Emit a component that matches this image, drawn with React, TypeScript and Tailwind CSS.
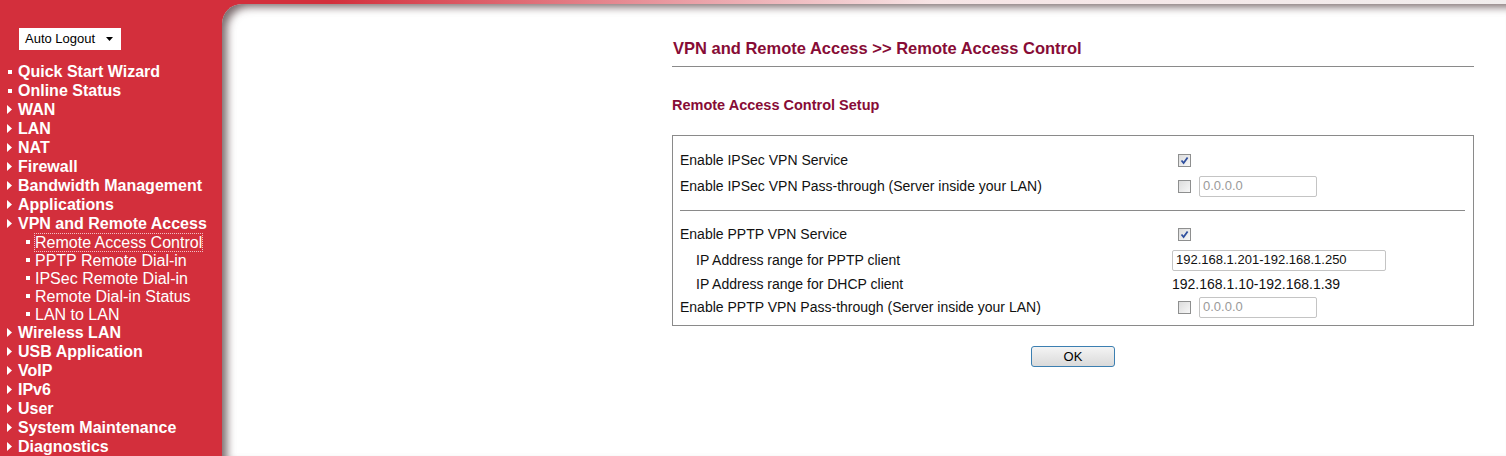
import React from "react";

type MenuItem = { label: string; marker: "square" | "arrow" };

const topItems: MenuItem[] = [
  { label: "Quick Start Wizard", marker: "square" },
  { label: "Online Status", marker: "square" },
  { label: "WAN", marker: "arrow" },
  { label: "LAN", marker: "arrow" },
  { label: "NAT", marker: "arrow" },
  { label: "Firewall", marker: "arrow" },
  { label: "Bandwidth Management", marker: "arrow" },
  { label: "Applications", marker: "arrow" },
  { label: "VPN and Remote Access", marker: "arrow" },
];

const subItems = [
  "Remote Access Control",
  "PPTP Remote Dial-in",
  "IPSec Remote Dial-in",
  "Remote Dial-in Status",
  "LAN to LAN",
];

const bottomItems: MenuItem[] = [
  { label: "Wireless LAN", marker: "arrow" },
  { label: "USB Application", marker: "arrow" },
  { label: "VoIP", marker: "arrow" },
  { label: "IPv6", marker: "arrow" },
  { label: "User", marker: "arrow" },
  { label: "System Maintenance", marker: "arrow" },
  { label: "Diagnostics", marker: "arrow" },
];

function Marker({ kind }: { kind: "square" | "arrow" }) {
  if (kind === "square") {
    return <span className="block w-[4px] h-[4px] bg-white ml-[8px]" />;
  }
  return (
    <svg width="6" height="9" viewBox="0 0 6 9" className="ml-[7px]">
      <path d="M0 0 L5 4.5 L0 9 Z" fill="#fff" />
    </svg>
  );
}

function MainLink({ item }: { item: MenuItem }) {
  return (
    <div className="flex items-center h-[19px]">
      <span className="w-[18px] flex items-center">
        <Marker kind={item.marker} />
      </span>
      <span className="text-white font-bold text-[16px] leading-[19px]">{item.label}</span>
    </div>
  );
}

function Checkbox({ checked }: { checked?: boolean }) {
  return (
    <span className="inline-flex items-center justify-center w-[13px] h-[13px] border border-[#8e8f8f] bg-gradient-to-br from-[#dcdcdc] to-[#f7f7f7]">
      {checked && (
        <svg width="9" height="9" viewBox="0 0 9 9">
          <path d="M1.5 4.5 L3.6 7 L7.6 1.5" fill="none" stroke="#2f4f9e" strokeWidth="1.8" />
        </svg>
      )}
    </span>
  );
}

function IpInput({ value, muted, width }: { value: string; muted?: boolean; width: string }) {
  return (
    <span
      className={`inline-flex items-center h-[21px] border border-[#c4c4c4] rounded-[2px] px-[3px] text-[13px] bg-white ${width} ${
        muted ? "text-[#9a9a9a]" : "text-[#111]"
      }`}
    >
      {value}
    </span>
  );
}

export default function App() {
  return (
    <div className="flex h-[456px] w-full overflow-hidden font-['Liberation_Sans',Arial,sans-serif] bg-[linear-gradient(to_right,#d32f3c_0%,#d32f3c_22%,#e99ca3_45%,#f6e4e5_62%,#f1eded_100%)]">
      {/* Sidebar */}
      <aside className="w-[222px] shrink-0 bg-[#d32f3c] pt-[28px]">
        <div className="ml-[19px] w-[102px] h-[22px] bg-white flex items-center justify-between pl-[6px] pr-[8px]">
          <span className="text-[13px] text-black">Auto Logout</span>
          <svg width="7" height="4" viewBox="0 0 7 4">
            <path d="M0 0 H7 L3.5 4 Z" fill="#000" />
          </svg>
        </div>

        <nav className="mt-[12px]">
          {topItems.map((it) => (
            <MainLink key={it.label} item={it} />
          ))}
          {subItems.map((s, i) => (
            <div key={s} className="flex items-center h-[18px]">
              <span className="w-[35px] flex items-center">
                <span className="block w-[4px] h-[4px] bg-white ml-[26px]" />
              </span>
              <span
                className={`text-white text-[16px] leading-[17px] ${
                  i === 0 ? "outline outline-1 outline-dotted outline-white/70" : ""
                }`}
              >
                {s}
              </span>
            </div>
          ))}
          {bottomItems.map((it) => (
            <MainLink key={it.label} item={it} />
          ))}
        </nav>
      </aside>

      {/* Main panel */}
      <main className="flex-1 mt-[4px] bg-white rounded-tl-[20px] shadow-[inset_7px_5px_8px_-2px_rgba(90,70,72,0.8)] pl-[450px] pt-[35px]">
        <div className="w-[802px]">
          <h1 className="text-[16.5px] font-bold text-[#870c36] leading-[19px] pl-[1px]">
            VPN and Remote Access &gt;&gt; Remote Access Control
          </h1>
          <div className="mt-[8px] h-[1px] bg-[#8a8a8a]" />

          <h2 className="mt-[30px] text-[14.5px] font-bold text-[#870c36] leading-[16px]">
            Remote Access Control Setup
          </h2>

          <div className="mt-[22px] border border-[#8a8a8a] px-[7px] pt-[11px] pb-[6px] text-[14px] text-[#111]">
            <div className="flex items-center h-[26px]">
              <span className="w-[492px]">Enable IPSec VPN Service</span>
              <span className="ml-[6px] flex items-center">
                <Checkbox checked />
              </span>
            </div>
            <div className="flex items-center h-[26px]">
              <span className="w-[492px]">Enable IPSec VPN Pass-through (Server inside your LAN)</span>
              <span className="ml-[6px] flex items-center gap-[8px]">
                <Checkbox />
                <IpInput value="0.0.0.0" muted width="w-[118px]" />
              </span>
            </div>

            <div className="mt-[11px] mb-[10px] mr-[1px] h-[1px] bg-[#8a8a8a]" />

            <div className="flex items-center h-[26px]">
              <span className="w-[492px]">Enable PPTP VPN Service</span>
              <span className="ml-[6px] flex items-center">
                <Checkbox checked />
              </span>
            </div>
            <div className="flex items-center h-[26px]">
              <span className="w-[492px] pl-[16px]">IP Address range for PPTP client</span>
              <IpInput value="192.168.1.201-192.168.1.250" width="w-[214px]" />
            </div>
            <div className="flex items-center h-[22px]">
              <span className="w-[492px] pl-[16px]">IP Address range for DHCP client</span>
              <span>192.168.1.10-192.168.1.39</span>
            </div>
            <div className="flex items-center h-[24px]">
              <span className="w-[492px]">Enable PPTP VPN Pass-through (Server inside your LAN)</span>
              <span className="ml-[6px] flex items-center gap-[8px]">
                <Checkbox />
                <IpInput value="0.0.0.0" muted width="w-[118px]" />
              </span>
            </div>
          </div>

          <div className="flex justify-center mt-[20px]">
            <button className="w-[84px] h-[21px] border border-[#3c7fb1] rounded-[3px] bg-gradient-to-b from-[#f4f4f4] to-[#dadada] text-[13px] text-black leading-none">
              OK
            </button>
          </div>
        </div>
      </main>
    </div>
  );
}
